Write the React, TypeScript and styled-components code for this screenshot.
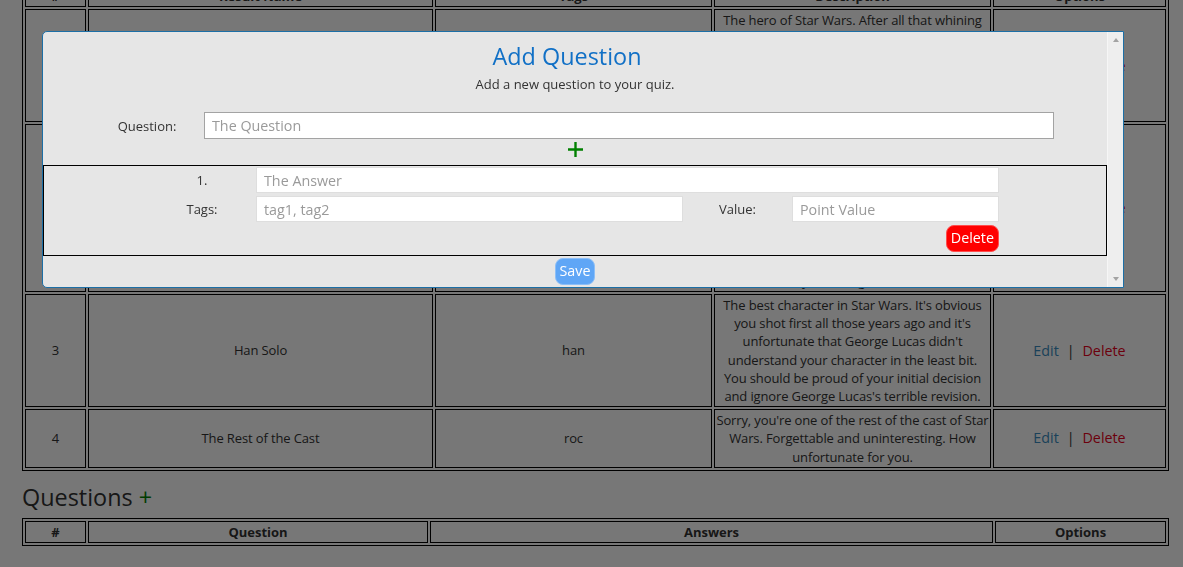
import { FC, useLayoutEffect, useRef } from 'react';
import styled, { createGlobalStyle, css } from 'styled-components';

interface Result {
  id: number;
  name: string;
  tag: string;
  description: string;
}

const RESULTS: Result[] = [
  {
    id: 1,
    name: 'Luke Skywalker',
    tag: 'luke',
    description:
      "The hero of Star Wars. After all that whining about power converters you finally left Tatooine, blew up the Death Star and saved your father from the dark side. Not bad at all for a farm boy who couldn't even lift his own X-wing.",
  },
  {
    id: 2,
    name: 'Darth Vader',
    tag: 'vader',
    description:
      'The villain of Star Wars. Once a promising young Jedi, you turned to the dark side and spent the rest of your life choking subordinates and breathing very loudly. In the end you saved your son and threw the Emperor down a shaft, so perhaps you are not all that bad. Still, you did help blow up an entire planet, which is a hard thing to forgive. Nobody ever forgets the mask.',
  },
  {
    id: 3,
    name: 'Han Solo',
    tag: 'han',
    description:
      "The best character in Star Wars. It's obvious you shot first all those years ago and it's unfortunate that George Lucas didn't understand your character in the least bit. You should be proud of your initial decision and ignore George Lucas's terrible revision.",
  },
  {
    id: 4,
    name: 'The Rest of the Cast',
    tag: 'roc',
    description:
      "Sorry, you're one of the rest of the cast of Star Wars. Forgettable and uninteresting. How unfortunate for you.",
  },
];

const GlobalStyle = createGlobalStyle`
  html, body {
    margin: 0;
    padding: 0;
    overflow: hidden;
  }
  body {
    font-family: 'Open Sans', 'DejaVu Sans', sans-serif;
    font-size: 13px;
    color: #333;
    background: #fff;
  }
  * {
    box-sizing: border-box;
  }
`;

const App: FC = () => {
  const pageRef = useRef<HTMLDivElement>(null);
  const firstRowRef = useRef<HTMLTableRowElement>(null);

  // the page sits scrolled down to the results table, under the open dialog
  useLayoutEffect(() => {
    const place = () => {
      const page = pageRef.current;
      const row = firstRowRef.current;
      if (!page || !row) return;
      const offset = row.getBoundingClientRect().top - page.getBoundingClientRect().top;
      page.scrollTop = page.scrollTop + offset - 9;
    };
    place();
    document.fonts?.ready.then(place);
  }, []);

  return (
    <>
      <GlobalStyle />
      <Page ref={pageRef}>
        <Content>
          <PageTitle>Star Wars Quiz</PageTitle>
          <SectionTitle>
            Results <AddMark>+</AddMark>
          </SectionTitle>
          <DataTable>
            <thead>
              <tr>
                <HeadCell $w={61}>#</HeadCell>
                <HeadCell $w={345}>Result Name</HeadCell>
                <HeadCell $w={277}>Tags</HeadCell>
                <HeadCell $w={277}>Description</HeadCell>
                <HeadCell>Options</HeadCell>
              </tr>
            </thead>
            <tbody>
              {RESULTS.map((r, i) => (
                <tr key={r.id} ref={i === 0 ? firstRowRef : undefined}>
                  <Cell>{r.id}</Cell>
                  <Cell>{r.name}</Cell>
                  <Cell>{r.tag}</Cell>
                  <Cell>{r.description}</Cell>
                  <Cell>
                    <OptionLink href="#">Edit</OptionLink>
                    <Divider>|</Divider>
                    <OptionLink href="#" $danger>
                      Delete
                    </OptionLink>
                  </Cell>
                </tr>
              ))}
            </tbody>
          </DataTable>

          <SectionTitle>
            Questions <AddMark>+</AddMark>
          </SectionTitle>
          <DataTable>
            <thead>
              <tr>
                <HeadCell $w={61}>#</HeadCell>
                <HeadCell $w={340}>Question</HeadCell>
                <HeadCell $w={563}>Answers</HeadCell>
                <HeadCell>Options</HeadCell>
              </tr>
            </thead>
          </DataTable>
        </Content>
      </Page>

      <Overlay />
      <Modal>
        <ModalBody>
          <ModalTitle>Add Question</ModalTitle>
          <ModalSubtitle>Add a new question to your quiz.</ModalSubtitle>

          <QuestionRow>
            <FieldLabel $nudge>Question:</FieldLabel>
            <TextInput $strong placeholder="The Question" />
          </QuestionRow>

          <AddAnswerRow>
            <svg width="15" height="15" viewBox="0 0 15 15">
              <path d="M7.5 0v15M0 7.5h15" stroke="#008000" strokeWidth="2.4" />
            </svg>
          </AddAnswerRow>

          <AnswerBox>
            <AnswerGrid>
              <FieldLabel>1.</FieldLabel>
              <TextInput $span placeholder="The Answer" />
              <FieldLabel>Tags:</FieldLabel>
              <TextInput placeholder="tag1, tag2" />
              <FieldLabel>Value:</FieldLabel>
              <TextInput placeholder="Point Value" />
              <ActionRow>
                <PillButton $variant="danger">Delete</PillButton>
              </ActionRow>
            </AnswerGrid>
          </AnswerBox>

          <SaveRow>
            <PillButton $variant="primary">Save</PillButton>
          </SaveRow>
        </ModalBody>
        <ScrollRail>
          <ScrollArrow $dir="up" />
          <ScrollArrow $dir="down" />
        </ScrollRail>
      </Modal>
    </>
  );
};

const Page = styled.div`
  height: 100vh;
  overflow: hidden;
`;
const Content = styled.div`
  padding: 10px 14px 60px 22px;
`;
const PageTitle = styled.h1`
  margin: 0 0 6px;
  font-size: 30px;
  font-weight: normal;
`;
const SectionTitle = styled.h2`
  margin: 10px 0 5px;
  font-size: 23.4px;
  font-weight: normal;
  line-height: normal;
  color: #333;
`;
const AddMark = styled.span`
  color: #008000;
`;

const DataTable = styled.table`
  width: 100%;
  table-layout: fixed;
  border: 1px solid #000;
  border-spacing: 2px;
  line-height: 1.4;
`;
const cellBase = css`
  border: 1px solid #000;
  padding: 1px;
  text-align: center;
  vertical-align: middle;
`;
const HeadCell = styled.th<{ $w?: number }>`
  ${cellBase};
  width: ${(p) => (p.$w ? `${p.$w}px` : 'auto')};
  font-weight: bold;
`;
const Cell = styled.td`
  ${cellBase};
  letter-spacing: -0.13px;
`;
const OptionLink = styled.a<{ $danger?: boolean }>`
  font-size: 14.3px;
  letter-spacing: 0;
  text-decoration: none;
  color: ${(p) => (p.$danger ? '#e8001c' : '#3a8cc0')};
`;
const Divider = styled.span`
  margin: 0 8px;
  font-size: 14.3px;
`;

const Overlay = styled.div`
  position: fixed;
  inset: 0;
  background: rgba(0, 0, 0, 0.533);
`;
const Modal = styled.div`
  position: fixed;
  top: 31px;
  left: 42px;
  width: 1082px;
  height: 257px;
  display: flex;
  background: #e6e6e6;
  border: 1px solid #1c6fa6;
  border-radius: 5px 0 0 5px;
  overflow: hidden;
`;
const ModalBody = styled.div`
  flex: 1;
  min-width: 0;
  padding-top: 8px;
`;
const ModalTitle = styled.h2`
  margin: 0;
  padding-right: 16px;
  font-size: 23.4px;
  line-height: 32px;
  font-weight: normal;
  text-align: center;
  color: #1170c6;
`;
const ModalSubtitle = styled.p`
  margin: 3px 0 0;
  line-height: 18px;
  text-align: center;
`;
const QuestionRow = styled.div`
  display: grid;
  grid-template-columns: 109px 1fr;
  align-items: center;
  margin-top: 19px;
  padding: 0 53px 0 52px;
`;
const FieldLabel = styled.label<{ $nudge?: boolean }>`
  text-align: center;
  padding-right: ${(p) => (p.$nudge ? '5px' : '0')};
`;
const TextInput = styled.input<{ $strong?: boolean; $span?: boolean }>`
  display: block;
  width: 100%;
  height: ${(p) => (p.$strong ? '27px' : '26px')};
  margin: 0;
  padding: 0 7px;
  border: 1px solid ${(p) => (p.$strong ? '#a3a3a3' : '#dedede')};
  background: #fff;
  font-family: inherit;
  font-size: 14.3px;
  color: #333;
  outline: none;
  grid-column: ${(p) => (p.$span ? 'span 3' : 'auto')};
  &::placeholder {
    color: #9a9a9a;
  }
`;
const AddAnswerRow = styled.div`
  display: flex;
  justify-content: center;
  height: 26px;
  padding-top: 3px;
  padding-left: 1px;
`;
const AnswerBox = styled.div`
  height: 91px;
  border: 1px solid #000;
  padding: 1px 107px 0 104px;
`;
const AnswerGrid = styled.div`
  display: grid;
  grid-template-columns: 108px 427px 109px 1fr;
  row-gap: 3px;
  align-items: center;
`;
const ActionRow = styled.div`
  grid-column: 1 / -1;
  display: flex;
  justify-content: flex-end;
`;
const PillButton = styled.button<{ $variant: 'primary' | 'danger' }>`
  height: 27px;
  padding: 0 4px;
  border-radius: 8px;
  font-family: inherit;
  font-size: 14.3px;
  line-height: 1;
  color: #fff;
  cursor: pointer;
  ${(p) =>
    p.$variant === 'danger'
      ? css`
          background: #ff0000;
          border: 1px solid #ff4d4d;
        `
      : css`
          background: #5fa6f6;
          border: 1px solid #8cbff8;
        `}
`;
const SaveRow = styled.div`
  display: flex;
  justify-content: center;
  margin-top: 2px;
`;
const ScrollRail = styled.div`
  width: 16px;
  display: flex;
  flex-direction: column;
  justify-content: space-between;
  align-items: center;
  padding: 6px 0;
  background: #eeeeee;
  border-left: 1px solid #f6f6f6;
`;
const ScrollArrow = styled.span<{ $dir: 'up' | 'down' }>`
  width: 0;
  height: 0;
  border-left: 3.5px solid transparent;
  border-right: 3.5px solid transparent;
  ${(p) =>
    p.$dir === 'up'
      ? css`
          border-bottom: 4px solid #a3a3a3;
        `
      : css`
          border-top: 4px solid #a3a3a3;
        `}
`;

export default App;
